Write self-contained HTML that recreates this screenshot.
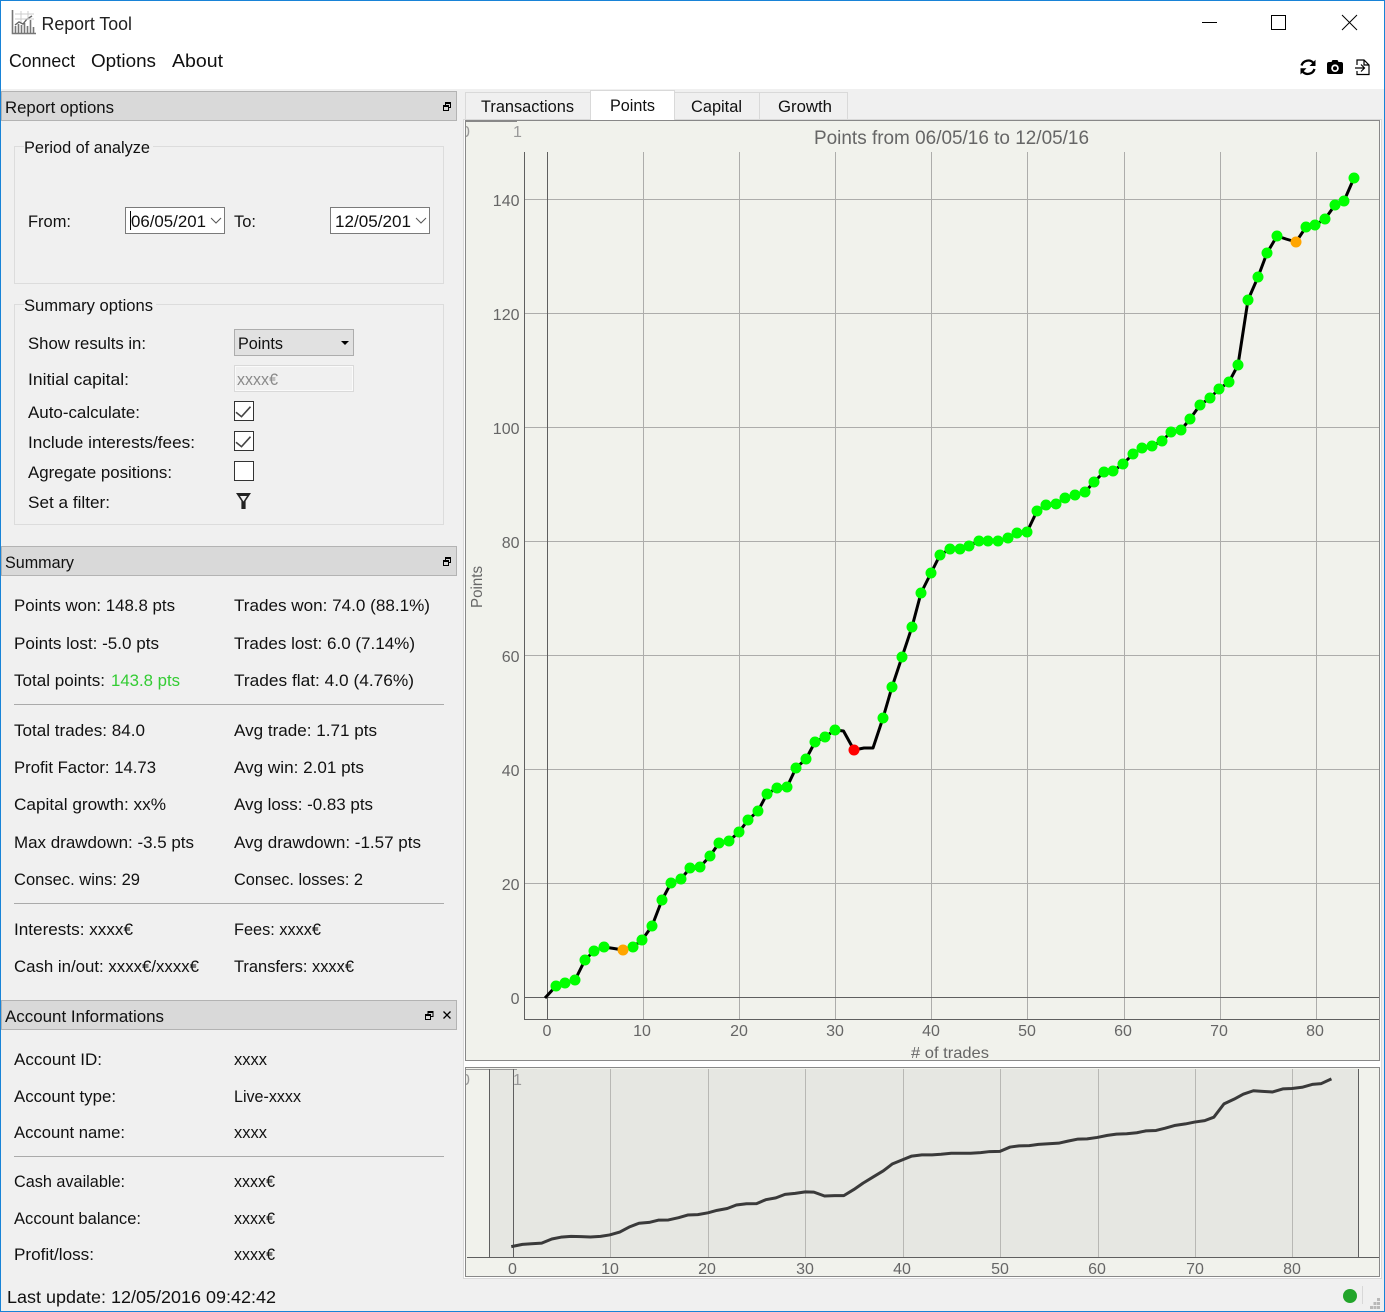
<!DOCTYPE html>
<html><head><meta charset="utf-8"><title>Report Tool</title>
<style>
html,body{margin:0;padding:0;background:#f0f0f0;width:1385px;height:1312px;overflow:hidden}
svg{display:block}
text{white-space:pre}
.a{fill:#666;font-size:16px}
.m{text-anchor:middle}
.e{text-anchor:end}
</style></head><body>
<svg width="1385" height="1312" viewBox="0 0 1385 1312" xmlns="http://www.w3.org/2000/svg" font-family="'Liberation Sans',sans-serif" font-size="16.8" fill="#111">
<defs><clipPath id="c1"><rect x="466" y="120" width="20" height="30"/></clipPath><clipPath id="c2"><rect x="466" y="1068" width="20" height="30"/></clipPath></defs>
<rect width="1385" height="1312" fill="#f0f0f0"/>
<rect width="1385" height="89" fill="#fff"/>

<!-- app icon -->
<g fill="none">
<path d="M12.5 10V33.5H36" stroke="#777" stroke-width="1.6"/>
<path d="M15.5 33V26M18.5 33V24M21.5 33V25M24.5 33V23M27.5 33V26M30.5 33V20M33.5 33V27" stroke="#777" stroke-width="1.6"/>
<path d="M15 25L19 22L23 24L27 19L32 16" stroke="#666" stroke-width="1.4"/>
<path d="M15 14H34M15 19H34M21 11V22M28 11V20" stroke="#ccc" stroke-width="1"/>
</g>
<text x="41.5" y="30" font-size="18" textLength="90.5" lengthAdjust="spacingAndGlyphs" fill="#222">Report Tool</text>
<text x="9" y="67" font-size="18" textLength="66" lengthAdjust="spacingAndGlyphs">Connect</text>
<text x="91" y="67" font-size="18" textLength="65" lengthAdjust="spacingAndGlyphs">Options</text>
<text x="172" y="67" font-size="18" textLength="51" lengthAdjust="spacingAndGlyphs">About</text>

<!-- window controls -->
<path d="M1202 22.5H1217" stroke="#000" fill="none"/>
<rect x="1271.5" y="15.5" width="14" height="14" stroke="#000" fill="none"/>
<path d="M1342 15L1357 30M1357 15L1342 30" stroke="#000" fill="none"/>

<!-- toolbar icons -->
<g fill="#000">
<path d="M1301.5 65.5A7 7 0 0 1 1313.5 63M1314.5 69A7 7 0 0 1 1302.5 71.5" fill="none" stroke="#000" stroke-width="2.3"/>
<path d="M1315.5 59.8V66H1309.5ZM1300.5 74.5V68.3H1306.5Z"/>
<path d="M1329 62H1331.5L1332.5 60H1337.5L1338.5 62H1341Q1343 62 1343 64V72Q1343 74 1341 74H1329Q1327 74 1327 72V64Q1327 62 1329 62Z"/>
<circle cx="1335" cy="68.2" r="3.8" fill="#fff"/><circle cx="1335" cy="68.2" r="2"/>
<path d="M1357 65V60H1364L1369 65V74.5H1357V71M1364 60V65H1369M1355 68H1364M1361 64.5L1364.5 68L1361 71.5" fill="none" stroke="#000" stroke-width="1.2"/>
</g>

<!-- dock title bars -->
<g fill="#d9d9d9" stroke="#b3b3b3">
<rect x="1.5" y="91.5" width="455" height="29"/>
<rect x="1.5" y="546.5" width="455" height="29"/>
<rect x="1.5" y="1000.5" width="455" height="29"/>
</g>
<g fill="none" stroke="#000" stroke-width="1">
<path d="M445.5 105V102.5H450.5V107.5H448.5M443.5 105.5H448.5V110.5H443.5Z"/>
<path d="M445.5 103.5H450.5M443.5 106.5H448.5" stroke-width="1"/>
<path d="M445.5 560V557.5H450.5V562.5H448.5M443.5 560.5H448.5V565.5H443.5Z"/>
<path d="M445.5 558.5H450.5M443.5 561.5H448.5"/>
<path d="M428 1014V1011.5H433V1016.5H431M425.5 1014.5H430.5V1019.5H425.5Z"/>
<path d="M428 1012.5H433M425.5 1015.5H430.5"/>
<path d="M443.5 1011.5L450.5 1018.5M450.5 1011.5L443.5 1018.5" stroke-width="1.3"/>
</g>
<text x="5" y="113" textLength="109" lengthAdjust="spacingAndGlyphs">Report options</text>
<text x="5" y="568" textLength="69" lengthAdjust="spacingAndGlyphs">Summary</text>
<text x="5" y="1022" textLength="159" lengthAdjust="spacingAndGlyphs">Account Informations</text>

<!-- group boxes -->
<g fill="none" stroke="#dcdcdc">
<path d="M24 146.5H14.5V283.5H443.5V146.5H153"/>
<path d="M24 304.5H14.5V524.5H443.5V304.5H156"/>
</g>
<text x="24" y="153" textLength="126" lengthAdjust="spacingAndGlyphs">Period of analyze</text>
<text x="24" y="311" textLength="129" lengthAdjust="spacingAndGlyphs">Summary options</text>

<text x="28" y="227" textLength="43" lengthAdjust="spacingAndGlyphs">From:</text>
<text x="234" y="227" textLength="22" lengthAdjust="spacingAndGlyphs">To:</text>
<rect x="125.5" y="207.5" width="99" height="26" fill="#fff" stroke="#7a7a7a"/>
<rect x="330.5" y="207.5" width="99" height="26" fill="#fff" stroke="#7a7a7a"/>
<text x="131" y="227" textLength="75" lengthAdjust="spacingAndGlyphs">06/05/201</text>
<text x="335" y="227" textLength="76" lengthAdjust="spacingAndGlyphs">12/05/201</text>
<path d="M130.5 211V230" stroke="#000" fill="none"/>
<path d="M211 218L216 223L221 218M416 218L421 223L426 218" stroke="#555" fill="none"/>

<text x="28" y="349" textLength="118" lengthAdjust="spacingAndGlyphs">Show results in:</text>
<rect x="234.5" y="329.5" width="119" height="26" fill="#e1e1e1" stroke="#adadad"/>
<text x="238" y="349" textLength="45" lengthAdjust="spacingAndGlyphs">Points</text>
<path d="M341 341H349L345 345Z" fill="#000"/>
<text x="28" y="385" textLength="101" lengthAdjust="spacingAndGlyphs">Initial capital:</text>
<rect x="234.5" y="365.5" width="119" height="26" fill="#f0f0f0" stroke="#d9d9d9"/>
<rect x="235.5" y="366.5" width="117" height="24" fill="none" stroke="#fafafa"/>
<text x="237" y="385" textLength="41" lengthAdjust="spacingAndGlyphs" fill="#8a8a8a">xxxx€</text>
<text x="28" y="418" textLength="112" lengthAdjust="spacingAndGlyphs">Auto-calculate:</text>
<text x="28" y="448" textLength="167" lengthAdjust="spacingAndGlyphs">Include interests/fees:</text>
<text x="28" y="478" textLength="144" lengthAdjust="spacingAndGlyphs">Agregate positions:</text>
<text x="28" y="508" textLength="82" lengthAdjust="spacingAndGlyphs">Set a filter:</text>
<g fill="#fff" stroke="#333">
<rect x="234.5" y="401.5" width="19" height="19"/>
<rect x="234.5" y="431.5" width="19" height="19"/>
<rect x="234.5" y="461.5" width="19" height="19"/>
</g>
<path d="M236 412.3L241.5 416.7L250.5 406.7M236 442.3L241.5 446.7L250.5 436.7" fill="none" stroke="#444" stroke-width="1.6"/>
<path d="M236 493H251L245.6 501V509H241.4V501Z" fill="#222"/>
<path d="M240 496H247L243.5 501.5Z" fill="#f0f0f0"/>

<!-- summary -->
<text x="14" y="611" textLength="161" lengthAdjust="spacingAndGlyphs">Points won: 148.8 pts</text>
<text x="234" y="611" textLength="196" lengthAdjust="spacingAndGlyphs">Trades won: 74.0 (88.1%)</text>
<text x="14" y="649" textLength="145" lengthAdjust="spacingAndGlyphs">Points lost: -5.0 pts</text>
<text x="234" y="649" textLength="181" lengthAdjust="spacingAndGlyphs">Trades lost: 6.0 (7.14%)</text>
<text x="14" y="686" textLength="91" lengthAdjust="spacingAndGlyphs">Total points:</text>
<text x="111" y="686" textLength="69" lengthAdjust="spacingAndGlyphs" fill="#33cc33">143.8 pts</text>
<text x="234" y="686" textLength="180" lengthAdjust="spacingAndGlyphs">Trades flat: 4.0 (4.76%)</text>
<path d="M14 704.5H444M14 903.5H444M14 1156.5H444" stroke="#aaa" fill="none"/>
<text x="14" y="736" textLength="131" lengthAdjust="spacingAndGlyphs">Total trades: 84.0</text>
<text x="234" y="736" textLength="143" lengthAdjust="spacingAndGlyphs">Avg trade: 1.71 pts</text>
<text x="14" y="773" textLength="142" lengthAdjust="spacingAndGlyphs">Profit Factor: 14.73</text>
<text x="234" y="773" textLength="130" lengthAdjust="spacingAndGlyphs">Avg win: 2.01 pts</text>
<text x="14" y="810" textLength="152" lengthAdjust="spacingAndGlyphs">Capital growth: xx%</text>
<text x="234" y="810" textLength="139" lengthAdjust="spacingAndGlyphs">Avg loss: -0.83 pts</text>
<text x="14" y="848" textLength="180" lengthAdjust="spacingAndGlyphs">Max drawdown: -3.5 pts</text>
<text x="234" y="848" textLength="187" lengthAdjust="spacingAndGlyphs">Avg drawdown: -1.57 pts</text>
<text x="14" y="885" textLength="126" lengthAdjust="spacingAndGlyphs">Consec. wins: 29</text>
<text x="234" y="885" textLength="129" lengthAdjust="spacingAndGlyphs">Consec. losses: 2</text>
<text x="14" y="935" textLength="119" lengthAdjust="spacingAndGlyphs">Interests: xxxx€</text>
<text x="234" y="935" textLength="87" lengthAdjust="spacingAndGlyphs">Fees: xxxx€</text>
<text x="14" y="972" textLength="185" lengthAdjust="spacingAndGlyphs">Cash in/out: xxxx€/xxxx€</text>
<text x="234" y="972" textLength="120" lengthAdjust="spacingAndGlyphs">Transfers: xxxx€</text>

<!-- account -->
<text x="14" y="1065" textLength="88" lengthAdjust="spacingAndGlyphs">Account ID:</text>
<text x="234" y="1065" textLength="33" lengthAdjust="spacingAndGlyphs">xxxx</text>
<text x="14" y="1102" textLength="102" lengthAdjust="spacingAndGlyphs">Account type:</text>
<text x="234" y="1102" textLength="67" lengthAdjust="spacingAndGlyphs">Live-xxxx</text>
<text x="14" y="1138" textLength="111" lengthAdjust="spacingAndGlyphs">Account name:</text>
<text x="234" y="1138" textLength="33" lengthAdjust="spacingAndGlyphs">xxxx</text>
<text x="14" y="1187" textLength="111" lengthAdjust="spacingAndGlyphs">Cash available:</text>
<text x="234" y="1187" textLength="41" lengthAdjust="spacingAndGlyphs">xxxx€</text>
<text x="14" y="1224" textLength="127" lengthAdjust="spacingAndGlyphs">Account balance:</text>
<text x="234" y="1224" textLength="41" lengthAdjust="spacingAndGlyphs">xxxx€</text>
<text x="14" y="1260" textLength="80" lengthAdjust="spacingAndGlyphs">Profit/loss:</text>
<text x="234" y="1260" textLength="41" lengthAdjust="spacingAndGlyphs">xxxx€</text>
<text x="7" y="1303" font-size="17.5" textLength="269" lengthAdjust="spacingAndGlyphs">Last update: 12/05/2016 09:42:42</text>

<!-- tabs -->
<rect x="465.5" y="92.5" width="125" height="28" fill="#f0f0f0" stroke="#d9d9d9"/>
<rect x="674.5" y="92.5" width="85" height="28" fill="#f0f0f0" stroke="#d9d9d9"/>
<rect x="759.5" y="92.5" width="88" height="28" fill="#f0f0f0" stroke="#d9d9d9"/>
<rect x="463.5" y="119.5" width="918" height="1159" fill="#fff" stroke="#d9d9d9"/>
<rect x="590.5" y="90.5" width="84" height="30" fill="#fff" stroke="#d9d9d9"/>
<rect x="591" y="119" width="83" height="2" fill="#fff"/>
<text x="481" y="112" textLength="93" lengthAdjust="spacingAndGlyphs">Transactions</text>
<text x="610" y="111" textLength="45" lengthAdjust="spacingAndGlyphs">Points</text>
<text x="691" y="112" textLength="51" lengthAdjust="spacingAndGlyphs">Capital</text>
<text x="778" y="112" textLength="54" lengthAdjust="spacingAndGlyphs">Growth</text>

<!-- main chart -->
<rect x="465.5" y="120.5" width="914" height="940" fill="#f1f2ec" stroke="#888"/>
<path d="M466 121.5H517" stroke="#888" fill="none"/>
<text x="461" y="137" font-size="16" fill="#999" clip-path="url(#c1)">0</text>
<text x="513" y="137" font-size="16" fill="#999">1</text>
<text x="814" y="144" font-size="19" fill="#666" textLength="275" lengthAdjust="spacingAndGlyphs">Points from 06/05/16 to 12/05/16</text>
<path d="M643.5 152V1019M739.5 152V1019M835.5 152V1019M931.5 152V1019M1027.5 152V1019M1124.5 152V1019M1220.5 152V1019M1316.5 152V1019M524 199.5H1379M524 313.5H1379M524 427.5H1379M524 541.5H1379M524 655.5H1379M524 769.5H1379M524 883.5H1379" stroke="#adadab" fill="none"/>
<path d="M524.5 152V1019.5H1379M547.5 152V1019M524 997.5H1379" stroke="#5f5f5f" fill="none"/>
<text class="a e" x="519.5" y="206">140</text>
<text class="a e" x="519.5" y="320">120</text>
<text class="a e" x="519.5" y="434">100</text>
<text class="a e" x="519.5" y="548">80</text>
<text class="a e" x="519.5" y="662">60</text>
<text class="a e" x="519.5" y="776">40</text>
<text class="a e" x="519.5" y="890">20</text>
<text class="a e" x="519.5" y="1004">0</text>
<text class="a m" x="547" y="1036">0</text>
<text class="a m" x="642" y="1036">10</text>
<text class="a m" x="739" y="1036">20</text>
<text class="a m" x="835" y="1036">30</text>
<text class="a m" x="931" y="1036">40</text>
<text class="a m" x="1027" y="1036">50</text>
<text class="a m" x="1123" y="1036">60</text>
<text class="a m" x="1219" y="1036">70</text>
<text class="a m" x="1315" y="1036">80</text>
<text x="911" y="1058" font-size="16" fill="#666" textLength="78" lengthAdjust="spacingAndGlyphs"># of trades</text>
<text transform="translate(482 608) rotate(-90)" font-size="16" fill="#666" textLength="42" lengthAdjust="spacingAndGlyphs">Points</text>

<polyline id="ln" fill="none" stroke="#000" stroke-width="3" stroke-linejoin="round" points="545,998 556,986 565,983 575,980 585,960 594,951 604,947 614,948.5 623,950 633,947 642,940 652,926 662,900 671,883 681,879 690,868 700,867 710,856 719,843 729,841 739,832 748,820 758,811 767,794 777,788 787,787 796,768 806,759 815,742 825,737 835,730 843.5,731 854,750 864,748 873,748 883,718 892,687 902,657 912,627 921,593 931,573 940,555 950,549 960,549 969,546 979,541 988,541 998,541 1008,538 1017,533 1027,532 1037,511 1046,505 1056,504 1065,498 1075,495 1085,492 1094,482 1104,472 1113,471 1123,464 1133,454 1142,448 1152,446 1162,441 1171,432 1181,430 1190,419 1200,405 1210,398 1219,389 1229,382 1238,365 1248,300 1258,277 1267,253 1277,236 1286,239 1296,242 1306,227 1315,225 1325,219 1335,205 1344,201 1354,178"/>
<path fill="none" stroke="#00ff00" stroke-width="11" stroke-linecap="round" d="M556 986h0M565 983h0M575 980h0M585 960h0M594 951h0M604 947h0M633 947h0M642 940h0M652 926h0M662 900h0M671 883h0M681 879h0M690 868h0M700 867h0M710 856h0M719 843h0M729 841h0M739 832h0M748 820h0M758 811h0M767 794h0M777 788h0M787 787h0M796 768h0M806 759h0M815 742h0M825 737h0M835 730h0M883 718h0M892 687h0M902 657h0M912 627h0M921 593h0M931 573h0M940 555h0M950 549h0M960 549h0M969 546h0M979 541h0M988 541h0M998 541h0M1008 538h0M1017 533h0M1027 532h0M1037 511h0M1046 505h0M1056 504h0M1065 498h0M1075 495h0M1085 492h0M1094 482h0M1104 472h0M1113 471h0M1123 464h0M1133 454h0M1142 448h0M1152 446h0M1162 441h0M1171 432h0M1181 430h0M1190 419h0M1200 405h0M1210 398h0M1219 389h0M1229 382h0M1238 365h0M1248 300h0M1258 277h0M1267 253h0M1277 236h0M1306 227h0M1315 225h0M1325 219h0M1335 205h0M1344 201h0M1354 178h0"/>
<circle cx="623" cy="950" r="5.5" fill="#ffa500"/>
<circle cx="1296" cy="242" r="5.5" fill="#ffa500"/>
<circle cx="854" cy="750" r="5.5" fill="#ff0000"/>

<!-- overview chart -->
<rect x="465.5" y="1067.5" width="914" height="209" fill="#f1f2ec" stroke="#888"/>
<rect x="490" y="1069" width="868" height="188" fill="#e6e7e2"/>
<path d="M466 1069.5H517" stroke="#999" fill="none"/>
<path d="M610.5 1069V1257M708.5 1069V1257M805.5 1069V1257M903.5 1069V1257M1000.5 1069V1257M1098.5 1069V1257M1195.5 1069V1257M1292.5 1069V1257" stroke="#b8b8b4" fill="none"/>
<path d="M489.5 1069V1257M1358.5 1069V1257M513.5 1069V1257M467 1257.5H1379" stroke="#5f5f5f" fill="none"/>
<text x="461" y="1085" font-size="16" fill="#999" clip-path="url(#c2)">0</text>
<text x="513" y="1085" font-size="16" fill="#999">1</text>
<polyline fill="none" stroke="#3a3a3a" stroke-width="3" stroke-linejoin="round" vector-effect="non-scaling-stroke" transform="matrix(1.0138 0 0 0.2048 -41.25 1042.41)" points="545,997 556,986 565,983 575,980 585,960 594,951 604,947 614,948.5 623,950 633,947 642,940 652,926 662,900 671,883 681,879 690,868 700,867 710,856 719,843 729,841 739,832 748,820 758,811 767,794 777,788 787,787 796,768 806,759 815,742 825,737 835,730 843.5,731 854,750 864,748 873,748 883,718 892,687 902,657 912,627 921,593 931,573 940,555 950,549 960,549 969,546 979,541 988,541 998,541 1008,538 1017,533 1027,532 1037,511 1046,505 1056,504 1065,498 1075,495 1085,492 1094,482 1104,472 1113,471 1123,464 1133,454 1142,448 1152,446 1162,441 1171,432 1181,430 1190,419 1200,405 1210,398 1219,389 1229,382 1238,365 1248,300 1258,277 1267,253 1277,236 1286,239 1296,242 1306,227 1315,225 1325,219 1335,205 1344,201 1354,178"/>
<text class="a m" x="512.5" y="1274">0</text>
<text class="a m" x="610" y="1274">10</text>
<text class="a m" x="707" y="1274">20</text>
<text class="a m" x="805" y="1274">30</text>
<text class="a m" x="902" y="1274">40</text>
<text class="a m" x="1000" y="1274">50</text>
<text class="a m" x="1097" y="1274">60</text>
<text class="a m" x="1195" y="1274">70</text>
<text class="a m" x="1292" y="1274">80</text>

<!-- status bar -->
<circle cx="1350" cy="1296" r="7" fill="#22a52a"/>
<path d="M1362.5 1286V1304" stroke="#d8d8d8" fill="none"/>
<path d="M1377 1298h3v3h-3zM1373.5 1302h3v3h-3zM1377 1302h3v3h-3zM1370 1306h3v3h-3zM1373.5 1306h3v3h-3zM1377 1306h3v3h-3z" fill="#b8b8b8"/>

<!-- window border -->
<rect x="0.5" y="0.5" width="1384" height="1311" fill="none" stroke="#1883d7"/>
</svg>
</body></html>
